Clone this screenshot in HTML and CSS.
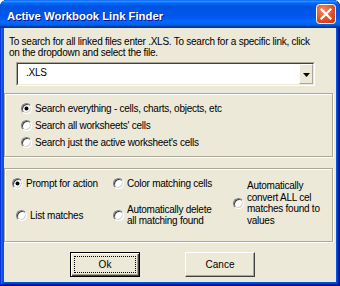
FILE: index.html
```html
<!DOCTYPE html>
<html>
<head>
<meta charset="utf-8">
<title>Active Workbook Link Finder</title>
<link rel="stylesheet" href="styles.css">
</head>
<body>
<div class="window">
  <div class="titlebar">
    <span class="title">Active Workbook Link Finder</span>
    <span class="close">
      <svg width="20" height="20" viewBox="0 0 20 20">
        <defs>
          <radialGradient id="cg" cx="0.35" cy="0.3" r="0.85">
            <stop offset="0" stop-color="#F08A6A"/>
            <stop offset="0.55" stop-color="#E0552E"/>
            <stop offset="1" stop-color="#C23A12"/>
          </radialGradient>
        </defs>
        <rect x="0.5" y="0.5" width="19" height="19" rx="3" fill="url(#cg)" stroke="#fff"/>
        <path d="M5.5 5.5 L14.5 14.5 M14.5 5.5 L5.5 14.5" stroke="#fff" stroke-width="2.2" stroke-linecap="square"/>
      </svg>
    </span>
  </div>
  <div class="client">
    <p class="intro">To search for all linked files enter .XLS. To search for a specific link, click<br>on the dropdown and select the file.</p>
    <div class="combo">
      <div class="combo-field">
        <span class="combo-value">.XLS</span>
        <span class="combo-btn"><svg width="7" height="4" viewBox="0 0 7 4"><path d="M0 0H7L3.5 4Z" fill="#000"/></svg></span>
      </div>
    </div>
    <div class="group scope">
      <label class="option"><span class="radio checked"></span><span>Search everything - cells, charts, objects, etc</span></label>
      <label class="option"><span class="radio"></span><span>Search all worksheets' cells</span></label>
      <label class="option"><span class="radio"></span><span>Search just the active worksheet's cells</span></label>
    </div>
    <div class="group actions">
      <label class="option a-prompt"><span class="radio checked"></span><span>Prompt for action</span></label>
      <label class="option a-color"><span class="radio"></span><span>Color matching cells</span></label>
      <label class="option a-convert"><span class="radio"></span><span class="multi">Automatically<br>convert ALL cel<br>matches found to<br>values</span></label>
      <label class="option a-list"><span class="radio"></span><span>List matches</span></label>
      <label class="option a-delete"><span class="radio"></span><span class="multi">Automatically delete<br>all matching found</span></label>
    </div>
    <div class="buttons">
      <button class="btn default"><span class="focus">Ok</span></button>
      <button class="btn"><span class="label">Cance</span></button>
    </div>
  </div>
</div>
</body>
</html>
```

FILE: styles.css
```css
* { box-sizing: border-box; }
html, body { margin: 0; padding: 0; }
body {
  width: 340px;
  height: 286px;
  overflow: hidden;
  background: #ffffff;
  font-family: "Liberation Sans", Arial, sans-serif;
  font-size: 10px;
  letter-spacing: -0.25px;
  color: #000;
}
.window {
  width: 340px;
  height: 286px;
  display: flex;
  flex-direction: column;
  background: #0054E3;
  border-radius: 7px 7px 0 0;
  padding-bottom: 4px;
  box-shadow: inset -1px -1px #00138C, inset 1px 1px #0831D9, inset -2px -2px #001EA0, inset 2px 2px #166AEE, inset -3px -3px #003BDA, inset 3px 3px #0855DD;
}
.titlebar {
  flex: none;
  height: 28px;
  display: flex;
  align-items: center;
  justify-content: space-between;
  padding: 0 4px 0 7px;
  border-radius: 7px 7px 0 0;
  background: linear-gradient(180deg, #0058EE 0%, #3593FF 4%, #288EFF 6%, #127DFF 8%, #036FFC 10%, #0262EE 14%, #0057E5 20%, #0054E3 24%, #0055EB 56%, #005BF5 66%, #026AFE 76%, #0062EF 86%, #0052D6 92%, #0040AB 94%, #003092 100%);
}
.title {
  margin-top: 4px;
  color: #fff;
  font-weight: bold;
  font-size: 11.3px;
  letter-spacing: 0;
  text-shadow: 1px 1px #0F1089;
  white-space: nowrap;
}
.close { width: 20px; height: 20px; display: block; }
.close svg { display: block; }
.client {
  flex: 1;
  margin: 0 4px;
  background: #ECE9D8;
  padding-top: 8px;
}
.intro {
  margin: 0 0 0 5px;
  line-height: 11px;
  white-space: nowrap;
}
.combo {
  margin: 4px 0 0 12px;
  width: 299px;
  height: 24px;
  border: 1px solid;
  border-color: #ACA899 #fff #fff #ACA899;
}
.combo-field {
  height: 100%;
  display: flex;
  background: #fff;
  border: 1px solid;
  border-color: #404040 #ECE9D8 #ECE9D8 #404040;
}
.combo-value {
  flex: 1;
  display: flex;
  align-items: center;
  padding: 0 0 3px 8px;
}
.combo-btn {
  width: 14px;
  display: flex;
  align-items: center;
  justify-content: center;
  background: #ECE9D8;
  border: 1px solid;
  border-color: #fff #ACA899 #ACA899 #fff;
}
.combo-btn svg { display: block; margin-top: 1px; }
.group {
  margin-right: 3px;
  border: 1px solid #ACA899;
  box-shadow: inset 1px 1px #fff, 1px 1px #fff;
}
.scope {
  margin-top: 7px;
  height: 64px;
  padding: 6px 0 0 16px;
  display: flex;
  flex-direction: column;
}
.scope .option { height: 17px; }
.option {
  display: flex;
  align-items: center;
  gap: 3px;
  white-space: nowrap;
}
.multi { line-height: 11px; }
.radio {
  flex: none;
  position: relative;
  width: 11px;
  height: 11px;
  border-radius: 50%;
  background: #fff;
  border: 1px solid;
  border-color: #808080 #fff #fff #808080;
  box-shadow: inset 1px 1px #404040, inset -1px -1px #D4D0C8;
}
.radio.checked::after {
  content: "";
  position: absolute;
  left: 3px;
  top: 3px;
  width: 3px;
  height: 3px;
  border-radius: 50%;
  background: #000;
  box-shadow: 0 0 0 0.5px #000;
}
.actions {
  margin-top: 11px;
  height: 74px;
  display: grid;
  grid-template-columns: 101px 120px 1fr;
  grid-template-rows: 12px 22px;
  row-gap: 15px;
  padding: 8px 0 0 7px;
}
.a-prompt { grid-column: 1; grid-row: 1; }
.a-color { grid-column: 2; grid-row: 1; }
.a-convert { grid-column: 3; grid-row: 1 / 3; align-self: end; }
.a-convert .multi { line-height: 11.5px; }
.a-list { grid-column: 1; grid-row: 2; margin-left: 4px; }
.a-delete { grid-column: 2; grid-row: 2; }
.buttons {
  margin-top: 10px;
  display: flex;
  gap: 45px;
  padding-left: 66px;
}
.btn {
  width: 70px;
  height: 25px;
  padding: 0;
  display: flex;
  font: inherit;
  color: #000;
  background: #ECE9D8;
  border: 1px solid;
  border-color: #fff #404040 #404040 #fff;
  box-shadow: inset -1px -1px #ACA899;
}
.btn.default {
  border-color: #000;
  box-shadow: inset 1px 1px #fff, inset -1px -1px #404040, inset -2px -2px #ACA899;
}
.focus, .label {
  flex: 1;
  display: flex;
  align-items: center;
  justify-content: center;
}
.focus {
  margin: 3px;
  border: 1px dotted #000;
}
```
